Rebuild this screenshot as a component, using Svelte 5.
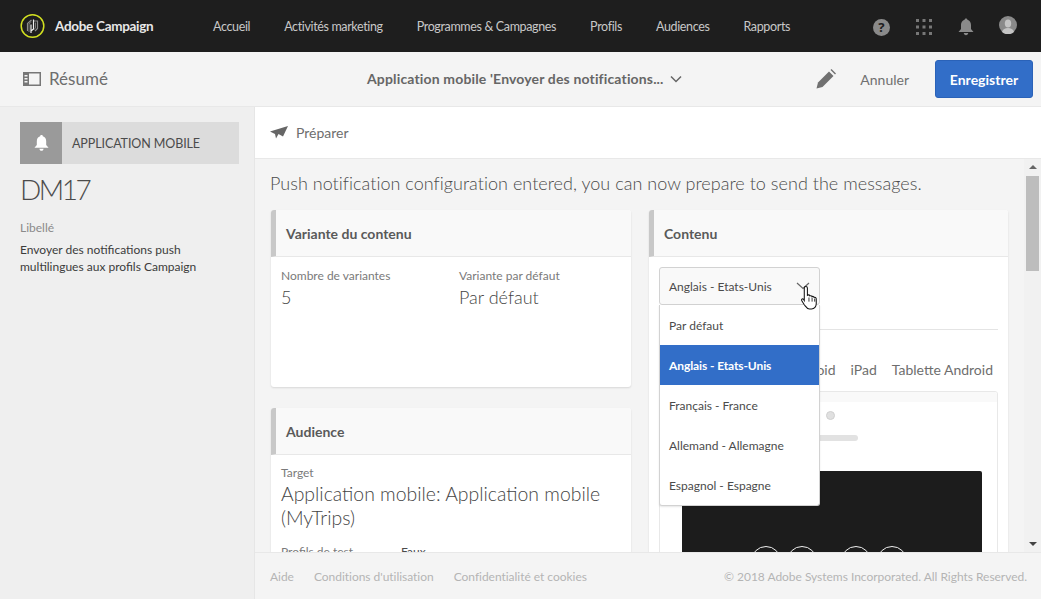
<script>
  const nav = ['Accueil', 'Activités marketing', 'Programmes & Campagnes', 'Profils', 'Audiences', 'Rapports']
  const langs = ['Par défaut', 'Anglais - Etats-Unis', 'Français - France', 'Allemand - Allemagne', 'Espagnol - Espagne']
</script>

<div class="page">
  <header class="top">
    <div class="brand">
      <svg width="26" height="26" viewBox="0 0 26 26" fill="none">
        <circle cx="12.500" cy="13" r="11.300" stroke="#d2e021" stroke-width="1.500" />
        <path d="M7.500 18V10.500L11.500 7M14 8h3.500v7.500L15 18" stroke="#8c8c8c" stroke-width="1.200" />
        <path d="M9 19V11l2.500-2M15.500 9.500v5.500l-2 2" stroke="#777" stroke-width="1" />
        <path d="M11 20v-8.500M13.500 6.500V16L11 18" stroke="#f0f0f0" stroke-width="1.200" />
      </svg>
      <span>Adobe Campaign</span>
    </div>
    <nav>
      {#each nav as item}
        <span>{item}</span>
      {/each}
    </nav>
    <div class="tools">
      <svg width="17" height="17" viewBox="0 0 18 18">
        <circle cx="9" cy="9" r="9" fill="#8a8a8a" />
        <text x="9" y="14" text-anchor="middle" class="q">?</text>
      </svg>
      <svg width="16" height="16" viewBox="0 0 16 16" fill="#777">
        {#each [0, 6.5, 13] as y}
          {#each [0, 6.5, 13] as x}
            <rect x={x} y={y} width="3" height="3" />
          {/each}
        {/each}
      </svg>
      <svg width="16" height="18" viewBox="0 0 16 18" fill="#8a8a8a">
        <path d="M8 0.500c.9 0 1.400.6 1.400 1.300C11.800 2.500 13 4.500 13 7v4l2.500 3H.5L3 11V7c0-2.500 1.200-4.500 3.600-5.200C6.600 1.100 7.100.5 8 .5zM5.800 15h4.400c0 1.300-1 2.200-2.200 2.200S5.800 16.300 5.800 15z" />
      </svg>
      <svg class="avatar" width="18" height="18" viewBox="0 0 18 18">
        <circle cx="9" cy="9" r="9" fill="#8a8a8a" />
        <ellipse cx="9" cy="7.500" rx="3.200" ry="4" fill="#c4c4c4" />
        <path d="M3 16c1-3 3-4 6-4s5 1 6 4a9 9 0 0 1-12 0z" fill="#c4c4c4" />
      </svg>
    </div>
  </header>

  <div class="bar">
    <div class="bar-left">
      <svg width="18" height="14" viewBox="0 0 18 14">
        <path d="M0 0h18v14H0z" fill="#777" />
        <path d="M6 1.500h10.500v11H6z" fill="#f4f4f4" />
        <path d="M1.500 3h3v1.500h-3zM1.500 6h3v1.500h-3zM1.500 9h3v1.500h-3z" fill="#f4f4f4" />
      </svg>
      <span>Résumé</span>
    </div>
    <div class="bar-title">
      <span>Application mobile 'Envoyer des notifications...</span>
      <svg width="12" height="8" viewBox="0 0 12 8" fill="none"><path d="M1 1.500l5 5 5-5" stroke="#666" stroke-width="1.500" /></svg>
    </div>
    <div class="bar-right">
      <svg width="20" height="20" viewBox="0 0 20 20" fill="#707070">
        <path d="M0.500 19.500l1.500-6L13 2.500l4.500 4.500L6.500 18z" />
        <path d="M14.500 1l1-1 4.500 4.500-1 1z" />
      </svg>
      <span class="cancel">Annuler</span>
      <button>Enregistrer</button>
    </div>
  </div>

  <div class="main">
    <aside>
      <div class="kind">
        <div class="kind-icon">
          <svg width="15" height="18" viewBox="0 0 16 18" fill="#fff">
            <path d="M8 0.500c.9 0 1.400.6 1.400 1.300C11.800 2.500 13 4.500 13 7v4l2.500 3H.5L3 11V7c0-2.500 1.200-4.500 3.600-5.200C6.600 1.100 7.100.5 8 .5zM5.800 15h4.400c0 1.300-1 2.200-2.200 2.200S5.800 16.300 5.800 15z" />
          </svg>
        </div>
        <span>APPLICATION MOBILE</span>
      </div>
      <h1>DM17</h1>
      <div class="side-label">Libellé</div>
      <p>Envoyer des notifications push<br />multilingues aux profils Campaign</p>
    </aside>

    <div class="content">
      <div class="step">
        <svg width="18" height="13" viewBox="0 0 18 13" fill="#666">
          <path d="M0 5.500L18 0 13 10.500 8.500 8 6 12.500 5 8z" />
        </svg>
        <span>Préparer</span>
      </div>

      <div class="scroll">
        <h2>Push notification configuration entered, you can now prepare to send the messages.</h2>
        <div class="cols">
          <div class="col">
            <section class="card variants">
              <h3>Variante du contenu</h3>
              <div class="body pair">
                <div>
                  <div class="label">Nombre de variantes</div>
                  <div class="value">5</div>
                </div>
                <div>
                  <div class="label">Variante par défaut</div>
                  <div class="value">Par défaut</div>
                </div>
              </div>
            </section>
            <section class="card">
              <h3>Audience</h3>
              <div class="body">
                <div class="label">Target</div>
                <div class="value wide">Application mobile: Application mobile (MyTrips)</div>
                <div class="row">
                  <span class="label">Profils de test</span>
                  <span class="faux">Faux</span>
                </div>
              </div>
            </section>
          </div>

          <section class="card col">
            <h3>Contenu</h3>
            <div class="body content-body">
              <div class="select-wrap">
                <div class="select">
                  <span>Anglais - Etats-Unis</span>
                  <svg width="14" height="8" viewBox="0 0 14 8" fill="none"><path d="M1 1l6 5.500L13 1" stroke="#666" stroke-width="1.200" /></svg>
                </div>
                <ul class="menu">
                  {#each langs as lang, i}
                    <li class:active={i === 1}>{lang}</li>
                  {/each}
                </ul>
                <svg class="cursor" width="20" height="26" viewBox="0 0 18 25">
                  <path d="M5 1.500c1 0 1.500.7 1.500 1.500v7l1-.5c.8 0 1.200.3 1.400 1 .6-.4 1.700-.3 2 .6.700-.4 1.800-.1 2 .8.800-.2 2 .2 2.100 1.300v4.800c0 2.500-1.800 5-4.500 5H8.500C6 23 5 21 3.500 19L1 15c-.5-1 .5-2 1.500-1.500L3.500 15V3c0-.8.700-1.500 1.500-1.500z" fill="#fff" stroke="#111" stroke-width="1" />
                  <path d="M8 12v4M11 12v4M13.500 13v3" stroke="#111" stroke-width="0.800" />
                </svg>
              </div>
              <div class="rule"></div>
              <div class="devices"><span>Android</span><span>iPad</span><span>Tablette Android</span></div>
              <div class="preview">
                <div class="preview-top"></div>
                <div class="speaker">
                  <i class="dot"></i>
                  <i class="slot"></i>
                </div>
                <div class="screen">
                  <div class="rings">
                    <i></i><i></i><b></b><i></i><i></i>
                  </div>
                </div>
              </div>
            </div>
          </section>
        </div>
      </div>

      <div class="track"><i class="up"></i><i class="thumb"></i><i class="down"></i></div>

      <footer>
        <span>Aide</span>
        <span>Conditions d'utilisation</span>
        <span>Confidentialité et cookies</span>
        <span class="copy">© 2018 Adobe Systems Incorporated. All Rights Reserved.</span>
      </footer>
    </div>
  </div>
</div>

<style>
  :global(body) {
    margin: 0;
    overflow: hidden;
    background: #fff;
  }
  .page {
    width: 1041px;
    height: 599px;
    display: flex;
    flex-direction: column;
    overflow: hidden;
    font-family: Lato, "Open Sans", sans-serif;
    color: #4b4b4b;
  }
  .top {
    height: 52px;
    flex: none;
    background: #1e1e1e;
    display: flex;
    align-items: center;
    padding-left: 20px;
    color: #c8c8c8;
  }
  .brand {
    display: flex;
    align-items: center;
    gap: 9px;
    width: 193px;
    font-size: 13.500px;
    font-weight: 700;
    letter-spacing: -0.3px;
    color: #e8e8e8;
  }
  nav {
    display: flex;
    gap: 34px;
    padding-top: 1px;
    font-size: 12.500px;
    letter-spacing: -0.36px;
  }
  .tools {
    margin-left: auto;
    display: flex;
    align-items: center;
    gap: 26px;
    padding: 2px 24px 0 0;
  }
  .tools .avatar {
    margin: -4px 0 0 -1px;
  }
  .q {
    font: 700 14px "Open Sans", sans-serif;
    fill: #1e1e1e;
  }
  .bar {
    height: 55px;
    flex: none;
    background: #f4f4f4;
    border-bottom: 1px solid #e8e8e8;
    box-sizing: border-box;
    display: flex;
    align-items: center;
    padding: 0 8px 0 23px;
  }
  .bar-left {
    display: flex;
    align-items: center;
    gap: 8px;
    padding-bottom: 1px;
    font-size: 17px;
    color: #6e6e6e;
    width: 344px;
  }
  .bar-title {
    display: flex;
    align-items: center;
    gap: 6px;
    padding-bottom: 1px;
    font-size: 14px;
    font-weight: 700;
    color: #666;
    letter-spacing: 0.15px;
  }
  .bar-right {
    margin-left: auto;
    display: flex;
    align-items: center;
  }
  .cancel {
    font-size: 14px;
    color: #707070;
    margin: 0 26px 0 24px;
  }
  button {
    width: 98px;
    height: 38px;
    background: #326ec8;
    border: 1px solid #2a62b8;
    border-radius: 3px;
    color: #fff;
    font: 700 14px Lato, sans-serif;
    padding: 0;
  }
  .main {
    flex: 1;
    display: flex;
    min-height: 0;
  }
  aside {
    width: 255px;
    flex: none;
    box-sizing: border-box;
    background: #efefef;
    border-right: 1px solid #e6e6e6;
    padding: 15px 15px 0 20px;
  }
  .kind {
    height: 42px;
    background: #dcdcdc;
    display: flex;
    align-items: center;
    font-size: 12.500px;
    letter-spacing: -0.1px;
    color: #4b4b4b;
  }
  .kind-icon {
    width: 42px;
    height: 42px;
    background: #9a9a9a;
    display: flex;
    align-items: center;
    justify-content: center;
    margin-right: 10px;
  }
  h1 {
    margin: 7px 0 0;
    font-size: 28px;
    font-weight: 300;
    letter-spacing: -2.500px;
    line-height: 36px;
    color: #4b4b4b;
  }
  .side-label {
    margin-top: 13px;
    font-size: 12px;
    line-height: 16px;
    color: #8a8a8a;
  }
  aside p {
    margin: 5px 0 0;
    font-size: 12px;
    line-height: 17px;
    color: #3c3c3c;
  }
  .content {
    flex: 1;
    min-width: 0;
    display: flex;
    flex-direction: column;
    position: relative;
    background: #f4f4f4;
  }
  .step {
    height: 52px;
    flex: none;
    box-sizing: border-box;
    background: #fff;
    border-bottom: 1px solid #e8e8e8;
    display: flex;
    align-items: center;
    gap: 8px;
    padding-left: 15px;
    font-size: 14px;
    color: #6e6e6e;
  }
  .scroll {
    flex: 1;
    min-height: 0;
    overflow: hidden;
    padding: 0 32px 0 15px;
  }
  h2 {
    margin: 12px 0 15px;
    font-size: 18px;
    line-height: 24px;
    font-weight: 300;
    letter-spacing: 0.03px;
    color: #4b4b4b;
    white-space: nowrap;
  }
  .cols {
    display: flex;
    gap: 18px;
    align-items: flex-start;
    margin-left: 1px;
  }
  .col {
    flex: none;
  }
  .cols > .col:first-child {
    width: 360px;
  }
  .cols > .col:last-child {
    width: 359px;
  }
  .card {
    background: #fff;
    border-radius: 3px;
    box-shadow: 0 1px 2px rgba(0, 0, 0, 0.12);
    margin-bottom: 21px;
  }
  .variants {
    height: 177px;
  }
  h3 {
    margin: 0;
    height: 47px;
    box-sizing: border-box;
    background: #f9f9f9;
    border-left: 5px solid #c8c8c8;
    border-bottom: 1px solid #e8e8e8;
    border-radius: 3px 3px 0 0;
    padding-left: 10px;
    display: flex;
    align-items: center;
    font-size: 14px;
    font-weight: 700;
    color: #5a5a5a;
  }
  .body {
    padding: 10px 10px 0;
  }
  .pair {
    display: grid;
    grid-template-columns: 178px 1fr;
  }
  .pair .label {
    line-height: 18px;
  }
  .label {
    font-size: 12px;
    line-height: 16px;
    color: #7a7a7a;
  }
  .value {
    font-size: 18px;
    line-height: 24px;
    font-weight: 300;
    color: #444;
  }
  .value.wide {
    font-size: 19.400px;
    padding-top: 1px;
  }
  .row {
    margin-top: 14px;
    display: flex;
    gap: 48px;
    font-size: 12px;
  }
  .faux {
    color: #4b4b4b;
  }
  .content-body {
    height: 360px;
  }
  .select-wrap {
    position: relative;
    width: 161px;
  }
  .select {
    height: 38px;
    box-sizing: border-box;
    border: 1px solid #d2d2d2;
    border-radius: 3px;
    background: #f9f9f9;
    display: flex;
    align-items: center;
    justify-content: space-between;
    padding: 0 9px;
    font-size: 12px;
    color: #4b4b4b;
  }
  .menu {
    position: absolute;
    z-index: 2;
    top: 38px;
    left: 0;
    width: 100%;
    box-sizing: border-box;
    margin: 0;
    padding: 0;
    list-style: none;
    background: #fff;
    border: 1px solid #d2d2d2;
    border-top: 0;
    border-radius: 0 0 3px 3px;
    box-shadow: 0 1px 2px rgba(0, 0, 0, 0.1);
  }
  .menu li {
    height: 40px;
    display: flex;
    align-items: center;
    padding-left: 9px;
    font-size: 12px;
    color: #4b4b4b;
  }
  .menu li.active {
    background: #326ec8;
    color: #fff;
    font-weight: 700;
    letter-spacing: -0.1px;
  }
  .cursor {
    position: absolute;
    z-index: 3;
    left: 141px;
    top: 18px;
  }
  .rule {
    height: 1px;
    background: #e4e4e4;
    margin-top: 24px;
  }
  .devices {
    display: flex;
    justify-content: flex-end;
    gap: 15px;
    margin: 31px 5px 0 0;
    font-size: 14px;
    line-height: 18px;
    color: #6e6e6e;
  }
  .preview {
    margin-top: 12px;
    height: 200px;
    border: 1px solid #e8e8e8;
    border-radius: 3px;
    overflow: hidden;
  }
  .preview-top {
    height: 10px;
    background: #f9f9f9;
  }
  .speaker {
    height: 69px;
    position: relative;
  }
  .dot {
    position: absolute;
    left: 166px;
    top: 9px;
    width: 7px;
    height: 7px;
    border-radius: 50%;
    background: #e0e0e0;
    border: 1px solid #d0d0d0;
  }
  .slot {
    position: absolute;
    left: 100px;
    top: 33px;
    width: 98px;
    height: 6px;
    border-radius: 3px;
    background: #e2e2e2;
  }
  .screen {
    margin: 0 15px 0 22px;
    height: 120px;
    background: #1c1c1c;
    border-radius: 2px 2px 0 0;
    padding-top: 75px;
  }
  .rings {
    display: flex;
    justify-content: center;
    padding-right: 6px;
  }
  .rings i {
    width: 30px;
    height: 30px;
    flex: none;
    box-sizing: border-box;
    border: 1.500px solid #eee;
    border-radius: 50%;
    margin: 0 3px;
  }
  .rings b {
    width: 18px;
    flex: none;
  }
  .track {
    position: absolute;
    right: 0;
    top: 52px;
    bottom: 47px;
    width: 17px;
    background: #f1f1f1;
  }
  .track .thumb {
    position: absolute;
    left: 2px;
    right: 2px;
    top: 17px;
    height: 95px;
    background: #bdbdbd;
  }
  .track .up,
  .track .down {
    position: absolute;
    left: 5px;
    width: 0;
    height: 0;
    border-left: 4px solid transparent;
    border-right: 4px solid transparent;
  }
  .track .up {
    top: 6px;
    border-bottom: 4px solid #666;
  }
  .track .down {
    bottom: 6px;
    border-top: 4px solid #444;
  }
  footer {
    height: 47px;
    flex: none;
    box-sizing: border-box;
    background: #f4f4f4;
    border-top: 1px solid #e8e8e8;
    position: relative;
    z-index: 4;
    display: flex;
    align-items: center;
    gap: 20px;
    padding: 0 14px 0 15px;
    font-size: 12px;
    letter-spacing: -0.03px;
    color: #b4b4b4;
  }
  .copy {
    margin-left: auto;
  }
</style>
